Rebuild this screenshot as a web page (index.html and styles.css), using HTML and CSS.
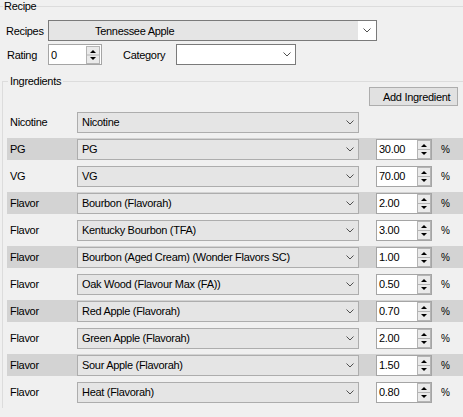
FILE: index.html
```html
<!DOCTYPE html>
<html>
<head>
<meta charset="utf-8">
<link rel="stylesheet" href="styles.css">
</head>
<body>
<fieldset class="group recipe-group">
  <legend>Recipe</legend>
  <div class="form-row r1">
    <span class="lbl lbl-recipes">Recipes</span>
    <div class="combo combo-recipe">
      <span class="combo-text">Tennessee Apple</span>
      <span class="combo-btn white"><svg width="8" height="5" viewBox="0 0 8 5"><polyline points="0.5,0.5 4,4 7.5,0.5" fill="none" stroke="#505050" stroke-width="1"/></svg></span>
    </div>
  </div>
  <div class="form-row r2">
    <span class="lbl lbl-rating">Rating</span>
    <div class="num num-rating">
      <span class="num-text">0</span>
      <svg class="spin" width="14" height="18" viewBox="0 0 14 18"><rect x="0.5" y="0.5" width="13" height="17" fill="#eaeaea" stroke="#b4b4b4"/><line x1="0.5" y1="9" x2="13.5" y2="9" stroke="#b4b4b4"/><polygon points="4,7 7,4 10,7" fill="#000"/><polygon points="4,11 10,11 7,14" fill="#000"/></svg>
    </div>
    <span class="lbl lbl-cat">Category</span>
    <div class="combo combo-cat">
      <span class="combo-text"></span>
      <span class="combo-btn"><svg width="8" height="5" viewBox="0 0 8 5"><polyline points="0.5,0.5 4,4 7.5,0.5" fill="none" stroke="#505050" stroke-width="1"/></svg></span>
    </div>
  </div>
</fieldset>

<fieldset class="group ing-group">
  <legend>Ingredients</legend>
  <div class="add-row"><button class="btn">Add Ingredient</button></div>

  <div class="row">
    <span class="rlbl">Nicotine</span>
    <div class="combo rcombo"><span class="combo-text">Nicotine</span><span class="combo-btn"><svg width="8" height="5" viewBox="0 0 8 5"><polyline points="0.5,0.5 4,4 7.5,0.5" fill="none" stroke="#505050"/></svg></span></div>
  </div>

  <div class="row alt">
    <span class="rlbl">PG</span>
    <div class="combo rcombo"><span class="combo-text">PG</span><span class="combo-btn"><svg width="8" height="5" viewBox="0 0 8 5"><polyline points="0.5,0.5 4,4 7.5,0.5" fill="none" stroke="#505050"/></svg></span></div>
    <div class="num rnum"><span class="num-text">30.00</span><svg class="spin" width="14" height="19" viewBox="0 0 14 19"><rect x="0.5" y="0.5" width="13" height="18" fill="#eaeaea" stroke="#b4b4b4"/><line x1="0.5" y1="9.5" x2="13.5" y2="9.5" stroke="#b4b4b4"/><polygon points="4,7 7,4 10,7" fill="#000"/><polygon points="4,12 10,12 7,15" fill="#000"/></svg></div>
    <span class="pct">%</span>
  </div>

  <div class="row">
    <span class="rlbl">VG</span>
    <div class="combo rcombo"><span class="combo-text">VG</span><span class="combo-btn"><svg width="8" height="5" viewBox="0 0 8 5"><polyline points="0.5,0.5 4,4 7.5,0.5" fill="none" stroke="#505050"/></svg></span></div>
    <div class="num rnum"><span class="num-text">70.00</span><svg class="spin" width="14" height="19" viewBox="0 0 14 19"><rect x="0.5" y="0.5" width="13" height="18" fill="#eaeaea" stroke="#b4b4b4"/><line x1="0.5" y1="9.5" x2="13.5" y2="9.5" stroke="#b4b4b4"/><polygon points="4,7 7,4 10,7" fill="#000"/><polygon points="4,12 10,12 7,15" fill="#000"/></svg></div>
    <span class="pct">%</span>
  </div>

  <div class="row alt">
    <span class="rlbl">Flavor</span>
    <div class="combo rcombo"><span class="combo-text">Bourbon (Flavorah)</span><span class="combo-btn"><svg width="8" height="5" viewBox="0 0 8 5"><polyline points="0.5,0.5 4,4 7.5,0.5" fill="none" stroke="#505050"/></svg></span></div>
    <div class="num rnum"><span class="num-text">2.00</span><svg class="spin" width="14" height="19" viewBox="0 0 14 19"><rect x="0.5" y="0.5" width="13" height="18" fill="#eaeaea" stroke="#b4b4b4"/><line x1="0.5" y1="9.5" x2="13.5" y2="9.5" stroke="#b4b4b4"/><polygon points="4,7 7,4 10,7" fill="#000"/><polygon points="4,12 10,12 7,15" fill="#000"/></svg></div>
    <span class="pct">%</span>
  </div>

  <div class="row">
    <span class="rlbl">Flavor</span>
    <div class="combo rcombo"><span class="combo-text">Kentucky Bourbon (TFA)</span><span class="combo-btn"><svg width="8" height="5" viewBox="0 0 8 5"><polyline points="0.5,0.5 4,4 7.5,0.5" fill="none" stroke="#505050"/></svg></span></div>
    <div class="num rnum"><span class="num-text">3.00</span><svg class="spin" width="14" height="19" viewBox="0 0 14 19"><rect x="0.5" y="0.5" width="13" height="18" fill="#eaeaea" stroke="#b4b4b4"/><line x1="0.5" y1="9.5" x2="13.5" y2="9.5" stroke="#b4b4b4"/><polygon points="4,7 7,4 10,7" fill="#000"/><polygon points="4,12 10,12 7,15" fill="#000"/></svg></div>
    <span class="pct">%</span>
  </div>

  <div class="row alt">
    <span class="rlbl">Flavor</span>
    <div class="combo rcombo"><span class="combo-text">Bourbon (Aged Cream) (Wonder Flavors SC)</span><span class="combo-btn"><svg width="8" height="5" viewBox="0 0 8 5"><polyline points="0.5,0.5 4,4 7.5,0.5" fill="none" stroke="#505050"/></svg></span></div>
    <div class="num rnum"><span class="num-text">1.00</span><svg class="spin" width="14" height="19" viewBox="0 0 14 19"><rect x="0.5" y="0.5" width="13" height="18" fill="#eaeaea" stroke="#b4b4b4"/><line x1="0.5" y1="9.5" x2="13.5" y2="9.5" stroke="#b4b4b4"/><polygon points="4,7 7,4 10,7" fill="#000"/><polygon points="4,12 10,12 7,15" fill="#000"/></svg></div>
    <span class="pct">%</span>
  </div>

  <div class="row">
    <span class="rlbl">Flavor</span>
    <div class="combo rcombo"><span class="combo-text">Oak Wood (Flavour Max (FA))</span><span class="combo-btn"><svg width="8" height="5" viewBox="0 0 8 5"><polyline points="0.5,0.5 4,4 7.5,0.5" fill="none" stroke="#505050"/></svg></span></div>
    <div class="num rnum"><span class="num-text">0.50</span><svg class="spin" width="14" height="19" viewBox="0 0 14 19"><rect x="0.5" y="0.5" width="13" height="18" fill="#eaeaea" stroke="#b4b4b4"/><line x1="0.5" y1="9.5" x2="13.5" y2="9.5" stroke="#b4b4b4"/><polygon points="4,7 7,4 10,7" fill="#000"/><polygon points="4,12 10,12 7,15" fill="#000"/></svg></div>
    <span class="pct">%</span>
  </div>

  <div class="row alt">
    <span class="rlbl">Flavor</span>
    <div class="combo rcombo"><span class="combo-text">Red Apple (Flavorah)</span><span class="combo-btn"><svg width="8" height="5" viewBox="0 0 8 5"><polyline points="0.5,0.5 4,4 7.5,0.5" fill="none" stroke="#505050"/></svg></span></div>
    <div class="num rnum"><span class="num-text">0.70</span><svg class="spin" width="14" height="19" viewBox="0 0 14 19"><rect x="0.5" y="0.5" width="13" height="18" fill="#eaeaea" stroke="#b4b4b4"/><line x1="0.5" y1="9.5" x2="13.5" y2="9.5" stroke="#b4b4b4"/><polygon points="4,7 7,4 10,7" fill="#000"/><polygon points="4,12 10,12 7,15" fill="#000"/></svg></div>
    <span class="pct">%</span>
  </div>

  <div class="row">
    <span class="rlbl">Flavor</span>
    <div class="combo rcombo"><span class="combo-text">Green Apple (Flavorah)</span><span class="combo-btn"><svg width="8" height="5" viewBox="0 0 8 5"><polyline points="0.5,0.5 4,4 7.5,0.5" fill="none" stroke="#505050"/></svg></span></div>
    <div class="num rnum"><span class="num-text">2.00</span><svg class="spin" width="14" height="19" viewBox="0 0 14 19"><rect x="0.5" y="0.5" width="13" height="18" fill="#eaeaea" stroke="#b4b4b4"/><line x1="0.5" y1="9.5" x2="13.5" y2="9.5" stroke="#b4b4b4"/><polygon points="4,7 7,4 10,7" fill="#000"/><polygon points="4,12 10,12 7,15" fill="#000"/></svg></div>
    <span class="pct">%</span>
  </div>

  <div class="row alt">
    <span class="rlbl">Flavor</span>
    <div class="combo rcombo"><span class="combo-text">Sour Apple (Flavorah)</span><span class="combo-btn"><svg width="8" height="5" viewBox="0 0 8 5"><polyline points="0.5,0.5 4,4 7.5,0.5" fill="none" stroke="#505050"/></svg></span></div>
    <div class="num rnum"><span class="num-text">1.50</span><svg class="spin" width="14" height="19" viewBox="0 0 14 19"><rect x="0.5" y="0.5" width="13" height="18" fill="#eaeaea" stroke="#b4b4b4"/><line x1="0.5" y1="9.5" x2="13.5" y2="9.5" stroke="#b4b4b4"/><polygon points="4,7 7,4 10,7" fill="#000"/><polygon points="4,12 10,12 7,15" fill="#000"/></svg></div>
    <span class="pct">%</span>
  </div>

  <div class="row">
    <span class="rlbl">Flavor</span>
    <div class="combo rcombo"><span class="combo-text">Heat (Flavorah)</span><span class="combo-btn"><svg width="8" height="5" viewBox="0 0 8 5"><polyline points="0.5,0.5 4,4 7.5,0.5" fill="none" stroke="#505050"/></svg></span></div>
    <div class="num rnum"><span class="num-text">0.80</span><svg class="spin" width="14" height="19" viewBox="0 0 14 19"><rect x="0.5" y="0.5" width="13" height="18" fill="#eaeaea" stroke="#b4b4b4"/><line x1="0.5" y1="9.5" x2="13.5" y2="9.5" stroke="#b4b4b4"/><polygon points="4,7 7,4 10,7" fill="#000"/><polygon points="4,12 10,12 7,15" fill="#000"/></svg></div>
    <span class="pct">%</span>
  </div>
</fieldset>
</body>
</html>
```

FILE: styles.css
```css
* { box-sizing: border-box; }
html, body { margin: 0; padding: 0; }
body {
  width: 463px;
  height: 417px;
  overflow: hidden;
  background: #f0f0f0;
  font-family: "Liberation Sans", Arial, sans-serif;
  font-size: 11px;
  letter-spacing: -0.3px;
  color: #000;
}

.group {
  margin: 0;
  border: none;
  border-top: 1px solid #dcdcdc;
  min-width: 0;
}
.group > legend {
  font-size: 11px;
  line-height: 12px;
  height: 12px;
}

.recipe-group { padding: 8px 0 0 3px; }
.recipe-group > legend { padding: 0 1px; }

.form-row { display: flex; align-items: center; height: 21px; }
.r2 { margin-top: 3px; }

.lbl { white-space: nowrap; }
.lbl-recipes { width: 45px; padding-left: 3px; }
.lbl-rating { width: 45px; padding-left: 4px; }
.lbl-cat { width: 53px; margin-left: 21px; }

.combo {
  display: flex;
  align-items: center;
  height: 21px;
  background: #e5e5e5;
  border: 1px solid #adadad;
}
.combo-text { flex: 1; padding-left: 3px; white-space: nowrap; overflow: hidden; }
.combo-btn {
  width: 17px;
  align-self: stretch;
  display: flex;
  align-items: center;
  justify-content: center;
}
.combo-btn svg { display: block; }
.combo-btn.white { background: #fff; width: 18px; }

.combo-recipe { width: 329px; border-color: #7a7a7a; }
.combo-recipe .combo-text { padding-left: 46px; }
.combo-cat { width: 120px; background: #fff; border-color: #7a7a7a; }

.num {
  display: flex;
  align-items: center;
  background: #fff;
  border: 1px solid #a5a5a5;
}
.num-text { flex: 1; padding-left: 2px; }
.spin { display: block; }
.num-rating { width: 54px; height: 21px; padding-right: 1px; }

.ing-group {
  margin: 10px 0 0 2px;
  border-left: 1px solid #dcdcdc;
  padding: 0 0 0 5px;
}
.ing-group > legend { padding: 0 2px; }

.add-row { display: flex; justify-content: flex-end; height: 19px; margin-bottom: 5px; }
.btn {
  width: 89px;
  height: 19px;
  margin: 0 5px 0 0;
  padding: 0 0 0 13px;
  text-align: left;
  font-family: "Liberation Sans", Arial, sans-serif;
  font-size: 11px;
  letter-spacing: -0.3px;
  color: #000;
  background: #e1e1e1;
  border: 1px solid #adadad;
  border-radius: 0;
}

.row {
  display: flex;
  align-items: center;
  height: 22px;
  margin: 0 0 5px -1px;
}
.row.alt { background: #d3d3d3; }
.rlbl { width: 70px; padding-left: 3px; white-space: nowrap; }
.rcombo { width: 282px; }
.rcombo .combo-text { padding-left: 4px; }
.rnum { width: 56px; height: 21px; margin-left: 17px; }
.pct { margin-left: 9px; font-size: 10px; letter-spacing: 0; }
```
